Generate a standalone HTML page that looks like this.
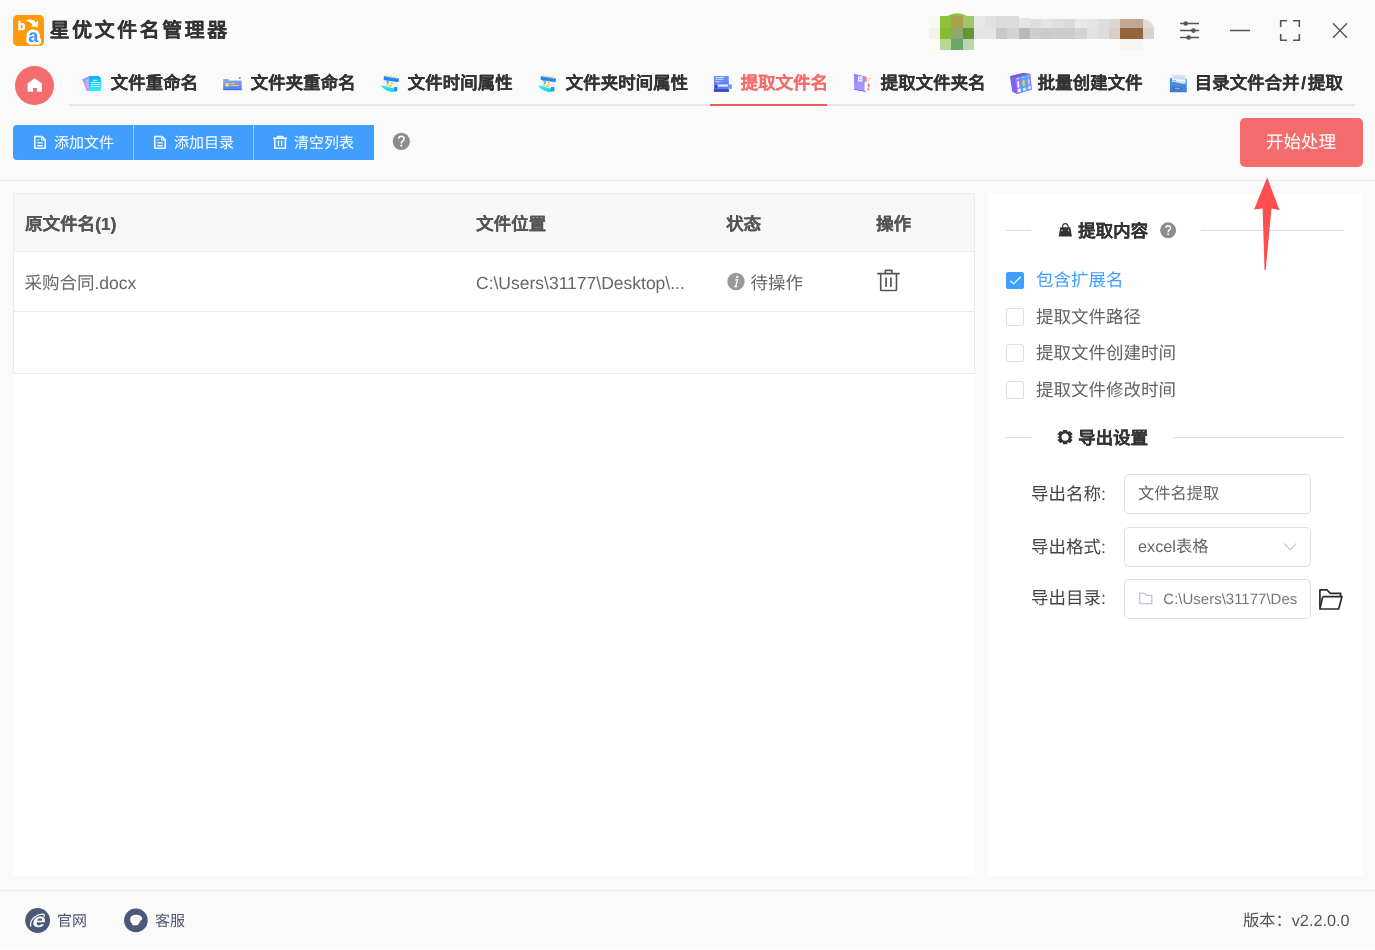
<!DOCTYPE html>
<html lang="zh-CN">
<head>
<meta charset="utf-8">
<title>星优文件名管理器</title>
<style>
html,body{margin:0;padding:0}
body{width:1375px;height:950px;overflow:hidden;background:#fafafa;font-family:"Liberation Sans",sans-serif;position:relative;color:#333;text-rendering:geometricPrecision}
#w{position:absolute;left:0;top:0;width:1375px;height:950px;will-change:transform}
.a{position:absolute}
.t{position:absolute;white-space:nowrap;line-height:1}
svg{position:absolute;overflow:visible}
/* title */
#title{left:49.5px;top:20.3px;font-size:20px;font-weight:bold;letter-spacing:2.5px;color:#333;line-height:22px;text-shadow:.25px 0 0 currentColor}
/* nav */
#navline{left:69px;top:104px;width:1286px;height:2px;background:#e4e7ed}
#navact{left:710px;top:104px;width:117px;height:2px;background:#f45b57}
.nv{font-size:17.5px;font-weight:bold;color:#333;top:72.6px;line-height:20px;margin-left:.4px;text-shadow:.28px 0 0 currentColor}
/* toolbar */
.btn{position:absolute;top:125px;height:35px;width:120px;background:#409eff}
.btn span{position:absolute;top:10.2px;font-size:15px;color:#fff;white-space:nowrap;line-height:17px}
#start{left:1240px;top:118px;width:123px;height:49px;border-radius:5px;background:#f56c6c}
#start span{position:absolute;left:26px;top:14px;font-size:17.5px;color:#fff;line-height:20px;white-space:nowrap}
#tbline{left:0;top:180px;width:1375px;height:1px;background:#ebebeb}
/* panels */
#lp{left:13px;top:193px;width:962px;height:683px;background:#fff}
#rp{left:988px;top:193px;width:375px;height:683px;background:#fff}
#tbl{left:13px;top:193px;width:962px;height:181px;border:1px solid #ebebeb;box-sizing:border-box}
#th{left:14px;top:194px;width:960px;height:57px;background:#f7f7f7}
.hl{position:absolute;left:14px;width:960px;height:1px;background:#ebebeb}
.th{font-size:17.5px;font-weight:bold;color:#555;top:214px;line-height:20px;text-shadow:.25px 0 0 currentColor}
.td{font-size:17.5px;color:#666;top:273px;line-height:20px}
/* right panel */
.dv{position:absolute;height:1px;background:#dcdfe6}
.dt{font-size:17.5px;font-weight:bold;color:#333;line-height:20px;margin-top:.4px;text-shadow:.25px 0 0 currentColor}
.cb{position:absolute;left:1006px;width:17.6px;height:17.5px;box-sizing:border-box;border:1px solid #dcdfe6;border-radius:2px;background:#fff}
.cl{font-size:17.5px;color:#606266;left:1036px;line-height:20px}
.lb{font-size:17.5px;color:#444;left:1031px;line-height:20px}
.in{position:absolute;left:1124px;width:187px;height:40px;box-sizing:border-box;border:1px solid #dcdfe6;border-radius:5px;background:#fff}
.iv{font-size:16.25px;color:#666;left:1138px;line-height:20px}
/* footer */
#ftline{left:0;top:890px;width:1375px;height:1px;background:#ebebeb}
.ft{font-size:15px;color:#555;top:911px;line-height:18px}
</style>
</head>
<body>
<div id="w">
<!-- TITLEBAR -->
<div class="t" id="title">星优文件名管理器</div>
<!-- NAV -->
<div class="a" id="navline"></div>
<div class="a" id="navact"></div>
<div class="t nv" style="left:110px">文件重命名</div>
<div class="t nv" style="left:250px">文件夹重命名</div>
<div class="t nv" style="left:407px">文件时间属性</div>
<div class="t nv" style="left:565px">文件夹时间属性</div>
<div class="t nv" style="left:740px;color:#f56c6c">提取文件名</div>
<div class="t nv" style="left:880px">提取文件夹名</div>
<div class="t nv" style="left:1037px">批量创建文件</div>
<div class="t nv" style="left:1194px">目录文件合并<span style="margin:0 1.7px">/</span>提取</div>
<!-- TOOLBAR -->
<div class="a" style="left:20px;top:125px;width:354px;height:35px;background:#9ccdff"></div>
<div class="btn" style="left:13px;border-radius:4px 0 0 4px"><span style="left:41px">添加文件</span></div>
<div class="btn" style="left:134px;width:119px"><span style="left:40px">添加目录</span></div>
<div class="btn" style="left:254px"><span style="left:40px">清空列表</span></div>
<div class="a" id="start"><span>开始处理</span></div>
<div class="a" id="tbline"></div>
<!-- PANELS -->
<div class="a" id="lp"></div>
<div class="a" id="rp"></div>
<div class="a" id="tbl"></div>
<div class="a" id="th"></div>
<div class="hl" style="top:251px"></div>
<div class="hl" style="top:311px"></div>
<div class="t th" style="left:25px">原文件名(1)</div>
<div class="t th" style="left:476px">文件位置</div>
<div class="t th" style="left:726px">状态</div>
<div class="t th" style="left:876px">操作</div>
<div class="t td" style="left:24.5px">采购合同.docx</div>
<div class="t td" style="left:476px">C:\Users\31177\Desktop\...</div>
<div class="t td" style="left:750.5px">待操作</div>
<!-- RIGHT PANEL -->
<div class="dv" style="left:1006px;top:230px;width:25px"></div>
<div class="dv" style="left:1201px;top:230px;width:143px"></div>
<div class="t dt" style="left:1078px;top:221px">提取内容</div>
<div class="cb" style="top:271.7px;height:17.2px;background:#409eff;border-color:#409eff"></div>
<div class="cb" style="top:308.1px"></div>
<div class="cb" style="top:344.4px"></div>
<div class="cb" style="top:381px"></div>
<div class="t cl" style="top:270px;color:#409eff">包含扩展名</div>
<div class="t cl" style="top:307px">提取文件路径</div>
<div class="t cl" style="top:343px">提取文件创建时间</div>
<div class="t cl" style="top:380px">提取文件修改时间</div>
<div class="dv" style="left:1006px;top:437px;width:25px"></div>
<div class="dv" style="left:1173px;top:437px;width:171px"></div>
<div class="t dt" style="left:1078px;top:428px">导出设置</div>
<div class="t lb" style="top:484px">导出名称:</div>
<div class="t lb" style="top:537px">导出格式:</div>
<div class="t lb" style="top:588px">导出目录:</div>
<div class="in" style="top:474px"></div>
<div class="in" style="top:527px"></div>
<div class="in" style="top:579px"></div>
<div class="t iv" style="top:484px">文件名提取</div>
<div class="t iv" style="top:537px">excel表格</div>
<div class="t iv" style="top:589.5px;left:1163.3px;width:134.9px;overflow:hidden;color:#777;font-size:15px">C:\Users\31177\Desktop</div>
<!-- FOOTER -->
<div class="a" style="left:0;top:947px;width:1375px;height:3px;background:linear-gradient(#fafafa,#fefefe)"></div>
<div class="a" id="ftline"></div>
<div class="t ft" style="left:57px;top:912.7px;color:#4f576f">官网</div>
<div class="t ft" style="left:155px;top:912.7px;color:#4f576f">客服</div>
<div class="t ft" style="left:1243px;top:911.8px;font-size:16.25px">版本：v2.2.0.0</div>
<!-- ICONS -->
<svg id="ic" width="1375" height="950" viewBox="0 0 1375 950" style="left:0;top:0">
<defs>
<linearGradient id="g1" x1="0" y1="0" x2="0" y2="1"><stop offset="0" stop-color="#0fb0f8"/><stop offset="1" stop-color="#20f8f4"/></linearGradient>
<linearGradient id="g1b" x1="0" y1="0" x2="0.3" y2="1"><stop offset="0" stop-color="#6aa8ff"/><stop offset="1" stop-color="#e08cf8"/></linearGradient>
<linearGradient id="g2" x1="0" y1="0" x2="0" y2="1"><stop offset="0" stop-color="#93a8ff"/><stop offset="1" stop-color="#4f7dff"/></linearGradient>
<linearGradient id="g5" x1="0" y1="0" x2="0" y2="1"><stop offset="0" stop-color="#6f90ff"/><stop offset="0.8" stop-color="#587af5"/><stop offset="1" stop-color="#4a63d8"/></linearGradient>
<linearGradient id="g6" x1="0" y1="0" x2="0" y2="1"><stop offset="0" stop-color="#8c84ff"/><stop offset="1" stop-color="#a89fff"/></linearGradient>
<linearGradient id="g7" x1="0" y1="0" x2="1" y2="0"><stop offset="0" stop-color="#7a5cf2"/><stop offset="1" stop-color="#9a7cf8"/></linearGradient>
<linearGradient id="g8" x1="0" y1="0" x2="0" y2="1"><stop offset="0" stop-color="#4a94e8"/><stop offset="1" stop-color="#3a7ccf"/></linearGradient>
<linearGradient id="gc" x1="0" y1="0" x2="1" y2="0.4"><stop offset="0" stop-color="#2aeaf5"/><stop offset="1" stop-color="#1fd0f5"/></linearGradient>
<g id="cal">
<path d="M1.5 4.5 L16 7 L15.5 15.5 L1 12.5 Z" fill="#eef0fb"/>
<path d="M1.9 1 L17 3.4 L16.5 7.2 L1.7 4.9 Z" fill="#1f8af5"/>
<path d="M4.3 0.2v1.6M7 0.6v1.6M9.4 1v1.6M11.8 1.4v1.6M14.2 1.8v1.6" stroke="#f7c98a" stroke-width="1" stroke-linecap="round"/>
<path d="M-1 10.5 C3 11 8 12.5 11.5 13.5 L15.2 13 L15.2 16.6 L10 17 C6 16.5 1 14 -1 10.5 Z" fill="url(#gc)"/>
<rect x="11.9" y="12" width="3.3" height="3.9" fill="#1d98f5"/>
<path d="M4.2 6.3 q1.5-.8 2.2.3 q.4 1-1.6 2.6" stroke="#2f9af5" stroke-width="1.1" fill="none"/>
<path d="M8.6 7.2 l1.6 .3 -.4 2.2" stroke="#f2c832" stroke-width="1.1" fill="none"/>
<circle cx="8.3" cy="11" r="1.5" fill="#f5dc1e"/>
<ellipse cx="4.4" cy="10.8" rx="1.4" ry=".8" fill="#f5dc1e"/>
</g>
</defs>
<!-- logo -->
<rect x="13" y="15" width="31" height="31" rx="4.5" fill="#ff990d"/>
<text x="17.8" y="29.5" font-family="Liberation Sans" font-weight="bold" font-size="12.5" fill="#fff" stroke="#fff" stroke-width=".45" stroke-linejoin="round">b</text>
<path d="M25.4 20.4 C29.5 18.4 34.2 19.6 35.9 22.6 L38.2 20.5 L37.6 27.2 L30.7 26.3 L32.8 24.9 C31.2 22.6 28.6 21.4 25.4 20.4 Z" fill="#fff"/>
<text x="28.2" y="42" font-family="Liberation Sans" font-weight="bold" font-size="18" fill="#3c96f8" stroke="#fff" stroke-width="5.4" stroke-linejoin="round" paint-order="stroke">a</text>
<!-- mosaic -->
<g shape-rendering="crispEdges">
<path d="M947 16 Q957 10.5 967 16 Z" fill="#8fc33a" shape-rendering="auto"/>
<rect x="929" y="16" width="11" height="12" fill="#f8f8f6"/><rect x="929" y="28" width="11" height="11" fill="#f1f4e8"/>
<rect x="940" y="16" width="11" height="12" fill="#8fc03c"/><rect x="951" y="16" width="12" height="12" fill="#a9a04b"/><rect x="963" y="16" width="11" height="12" fill="#a3c56a"/>
<rect x="940" y="28" width="11" height="11" fill="#86bd2e"/><rect x="951" y="28" width="12" height="11" fill="#90a774"/><rect x="963" y="28" width="11" height="11" fill="#5f9733"/>
<rect x="940" y="39" width="11" height="11" fill="#b6d794"/><rect x="951" y="39" width="12" height="11" fill="#69a86c"/><rect x="963" y="39" width="11" height="11" fill="#c2d3b2"/>
<rect x="974" y="16" width="11" height="12" fill="#e7e7e7"/><rect x="985" y="16" width="11" height="12" fill="#e1e1e1"/><rect x="996" y="16" width="23" height="12" fill="#dbdbdb"/>
<rect x="1019" y="18" width="11" height="10" fill="#e5e5e5"/><rect x="1030" y="19" width="11" height="9" fill="#dedede"/><rect x="1041" y="19" width="12" height="9" fill="#e4e4e4"/><rect x="1053" y="19" width="11" height="9" fill="#dfdfdf"/><rect x="1064" y="19" width="11" height="9" fill="#dadada"/><rect x="1075" y="19" width="12" height="9" fill="#e8e8e8"/><rect x="1087" y="19" width="11" height="9" fill="#e4e4e4"/><rect x="1098" y="19" width="11" height="9" fill="#dddddd"/><rect x="1109" y="19" width="11" height="9" fill="#dcd6d2"/>
<rect x="974" y="28" width="22" height="11" fill="#e5e5e5"/><rect x="996" y="28" width="11" height="11" fill="#c9c9c9"/><rect x="1007" y="28" width="12" height="11" fill="#d3d3d3"/><rect x="1019" y="28" width="11" height="11" fill="#b9b9b9"/><rect x="1030" y="28" width="11" height="11" fill="#cecece"/><rect x="1041" y="28" width="12" height="11" fill="#cbcbcb"/><rect x="1053" y="28" width="22" height="11" fill="#cdcdcd"/><rect x="1075" y="28" width="12" height="11" fill="#d4d4d4"/><rect x="1087" y="28" width="11" height="11" fill="#e2e2e2"/><rect x="1098" y="28" width="11" height="11" fill="#dcdcdc"/><rect x="1109" y="28" width="11" height="11" fill="#d9cdc5"/>
<rect x="1120" y="19" width="23" height="9" fill="#c3a795"/><rect x="1120" y="28" width="23" height="11" fill="#95643a"/>
<path d="M1143 19 Q1153 21 1154 28 L1143 28 Z" fill="#e6dbd3" shape-rendering="auto"/><rect x="1143" y="28" width="11" height="11" fill="#ddd0c6"/>
<rect x="1120" y="39" width="23" height="11" fill="#f7f5f3"/>
</g>
<!-- window controls -->
<g stroke="#555" stroke-width="1.5" fill="none">
<path d="M1180 23.5H1199M1180 30.6H1199M1180 37.5H1199"/>
<path d="M1230 30.5H1250"/>
<path d="M1280.7 27V20.8H1287M1293 20.8H1299.3V27M1299.3 34V40.2H1293M1287 40.2H1280.7V34" stroke-width="1.6"/>
<path d="M1333 23.3L1347 37.7M1347 23.3L1333 37.7" stroke-width="1.4"/>
</g>
<circle cx="1185.7" cy="23.5" r="2.3" fill="#555"/><circle cx="1193.4" cy="30.6" r="2.3" fill="#555"/><circle cx="1188.7" cy="37.5" r="2.3" fill="#555"/>
<!-- home -->
<circle cx="34.5" cy="85.5" r="19.5" fill="#f56c6e"/>
<path d="M34.7 78.2L41.9 83.6V91.8H36.9V87.9H33V91.8H27.6V83.6Z" fill="#fff"/>
<!-- toolbar icons -->
<g fill="none" stroke="#fff" stroke-width="1.5" stroke-linejoin="round">
<path d="M34.8 136.5H41.8L45.2 139.8V148.2H34.8Z"/><path d="M41.6 136.5V140H45.2M37.3 142.8H42.8M37.3 145.6H42.8M37.3 140H39.2" stroke-width="1.2"/>
<path d="M154.8 136.5H161.8L165.2 139.8V148.2H154.8Z"/><path d="M161.6 136.5V140H165.2M157.3 142.8H162.8M157.3 145.6H162.8M157.3 140H159.2" stroke-width="1.2"/>
<path d="M273.2 138.2H286.8M277.6 138V136.4H282.6V138M274.8 138.4V148.3H285.4V138.4" stroke-width="1.5"/><path d="M278.5 140.6V146M281.6 140.6V146" stroke-width="1.3"/>
</g>
<circle cx="401.3" cy="141.3" r="8.6" fill="#8c8c8c"/>
<path d="M398.6 138.6Q398.8 136.3 401.4 136.3Q404.2 136.4 404.1 138.8Q404 140.3 402.5 141.2Q401.3 142 401.3 143.4" fill="none" stroke="#fff" stroke-width="1.6"/><circle cx="401.3" cy="145.6" r="1.05" fill="#fff"/>
<!-- arrow -->
<path d="M1267.2 177.5L1279.6 210.2L1271.5 208.6L1265.7 270H1264.5L1262.6 208.4L1254 209.4Z" fill="#fd4f4f"/>
<!-- nav icon 1: docs -->
<path d="M82.3 79.2L88.9 76.4V90.7L86.8 91.2Z" fill="url(#g1b)"/>
<path d="M85 77.8L89.5 76.2V90.8L88 91Z" fill="#a99cfa" opacity=".7"/>
<path d="M85.9 81L88.6 80.2M86.3 83.2L88.6 82.7M86.7 85.3L88.6 85M87.1 87.3L88.6 87.1" stroke="#fff" stroke-width=".8" opacity=".75"/>
<path d="M88.9 75.9H98.6L100.9 78.2V90.9H88.9Z" fill="url(#g1)"/>
<path d="M98.2 75.9L100.9 78.6H98.2Z" fill="#0a9af5"/>
<path d="M93 80.3H97M91.1 82.5H99.8M91.1 84.5H99.8M91.1 86.5H99.8" stroke="#fff" stroke-width=".9" opacity=".95"/>
<!-- nav icon 2: folder card -->
<path d="M223.2 79.4Q223.2 78.9 223.7 78.9H228.6L229.2 80.5H241.2Q241.7 80.5 241.7 81V90.1H223.2Z" fill="url(#g2)"/>
<rect x="223.2" y="88.8" width="18.5" height="1.4" fill="#3d6cf6"/>
<rect x="225.3" y="83.2" width="3.6" height="3.2" rx=".4" fill="#ffe93a"/>
<path d="M230.3 83.6H234.7M230.3 85.5H238.8" stroke="#f7e23c" stroke-width=".9"/>
<circle cx="239.8" cy="77.9" r="1" fill="#f4606c"/>
<!-- nav icon 3,4: calendar -->
<use href="#cal" x="382" y="75"/>
<use href="#cal" x="539" y="75"/>
<!-- nav icon 5 -->
<rect x="713.9" y="76.1" width="14.9" height="15.7" rx=".6" fill="url(#g5)"/>
<rect x="713.9" y="89.3" width="14.9" height="2.5" fill="#3a49b4"/>
<rect x="728" y="84.4" width="3.8" height="4.4" fill="#7196ff"/>
<path d="M715.6 77.6H724M715.6 79.3H723.4M715.6 81.6H718.8" stroke="#dfe6ff" stroke-width=".9"/>
<path d="M719 81.6H722.5" stroke="#8fa8ff" stroke-width=".9"/>
<rect x="717.7" y="84.5" width="10.2" height="2.1" fill="#eef2ff"/>
<rect x="715.4" y="85" width="1.7" height="3.6" fill="#2c3896"/>
<!-- nav icon 6: book -->
<path d="M853.9 73.8L865.6 76.4V91.8L854.1 89.8Z" fill="url(#g6)"/>
<path d="M854.1 88.9L865.6 90.9V91.8L854.1 89.8Z" fill="#6b5fe0"/>
<rect x="857.9" y="76.3" width="4.7" height="5.3" fill="#f2f0ff"/>
<path d="M859 78h1.2M859 79.6h2.6" stroke="#8f88ff" stroke-width=".7"/>
<path d="M865.6 77L867.2 77.2V81.3L865.6 81.2Z" fill="#ff8a6e"/>
<path d="M867.8 78.1H871L870.6 79.2H867.8Z" fill="#ffd348"/>
<path d="M868 80L870 80.2V81L868 80.8Z" fill="#ffe9a8"/>
<path d="M864.6 82.2L867.6 82.6V90.9L864.6 90.6Z" fill="#fff"/>
<ellipse cx="868.7" cy="85.6" rx="1.1" ry="2" fill="#ff6b7c"/>
<circle cx="868" cy="89.3" r="1.15" fill="#ff6b7c"/>
<!-- nav icon 7: binders -->
<path d="M1009.9 76.2L1023.3 72.9L1030.3 74L1031.8 89.5L1017.3 93.9L1012.3 91.7Z" fill="url(#g7)"/>
<path d="M1009.9 76.2L1023.3 72.9L1030.3 74L1016 77.5Z" fill="#6d58d6"/>
<path d="M1015.6 77.6L1020.6 76.3L1021.7 92.6L1017.3 93.9Z" fill="#9a7af9"/>
<path d="M1020.6 76.3L1025.9 75L1027 91L1021.7 92.6Z" fill="#36b6f6"/>
<path d="M1025.9 75L1030.3 74L1031.8 89.5L1027 91Z" fill="#8a8cff"/>
<path d="M1016.5 78.6L1019 78V79L1016.5 79.6Z" fill="#e9e2ff"/>
<path d="M1021.8 77.3L1024.6 76.6V77.6L1021.8 78.3Z" fill="#7fdcff"/>
<path d="M1026.7 76L1029.4 75.4V76.4L1026.7 77Z" fill="#6fd0ff"/>
<path d="M1017.3 81.6L1019 81.2L1019.4 87.3L1017.7 87.7Z" fill="#fff"/>
<path d="M1022.2 80.6L1024.4 80.1L1024.9 85.6L1022.7 86.1Z" fill="#ffca4c"/>
<path d="M1027.6 78.9L1029.3 78.5L1029.7 84.1L1028 84.5Z" fill="#a8dcff"/>
<path d="M1017.6 89.2L1020.6 88.4L1020.9 91.8L1017.9 92.6Z" fill="#e9fbff"/>
<path d="M1023 88.2L1025.6 87.5L1025.9 90.2L1023.3 90.9Z" fill="#e9f6ff"/>
<path d="M1028 86.4L1030.7 85.7L1031 88.6L1028.3 89.3Z" fill="#d6ecff"/>
<!-- nav icon 8: drawer -->
<path d="M1169.9 78.3L1172.2 78.1V84H1169.9Z" fill="#3f8cf0"/>
<path d="M1172.2 74.4L1185.7 75.4V84H1172.2Z" fill="#d9e3f3"/>
<path d="M1172.4 77.4L1185.6 78.6" stroke="#b9cdf0" stroke-width=".7"/>
<path d="M1172.6 79.8L1185.4 80.8" stroke="#fff" stroke-width=".9"/>
<path d="M1172.8 80.5H1176" stroke="#5f9cf0" stroke-width=".7"/>
<path d="M1185.7 78.6L1186.8 79.4V84H1185.7Z" fill="#3f8cf0"/>
<path d="M1169.9 81.6Q1176 82 1179 83Q1183 84.4 1186.8 83.2V92.3H1169.9Z" fill="url(#g8)"/>
<rect x="1173" y="87.6" width="9.1" height="1.7" rx=".8" fill="#2d62c2"/>
<rect x="1174.6" y="87.9" width="5.6" height="1" fill="#c9b272"/>
<!-- table icons -->
<circle cx="736" cy="281.5" r="8.7" fill="#999"/>
<circle cx="737.2" cy="277" r="1.15" fill="#fff"/>
<path d="M735.2 279.8H737.6L735.7 286.6H737M734 286.6H737.2" fill="none" stroke="#fff" stroke-width="1.3"/>
<g fill="none" stroke="#555" stroke-width="1.6" stroke-linecap="round" stroke-linejoin="round">
<path d="M877.8 273.6H899.2M885.3 273.4V270.4H891.9V273.4M880.7 274V289.4Q880.7 290.5 881.8 290.5H895.4Q896.5 290.5 896.5 289.4V274"/>
<path d="M886.1 278.2V286.2M890.9 278.2V286.2" stroke-width="1.7"/>
</g>
<!-- right panel icons -->
<path d="M1060.3 227.3H1070.3L1071.9 236.6H1058.7Z" fill="#333"/>
<path d="M1062.5 227.6Q1062.5 223.6 1065.3 223.6Q1068.1 223.6 1068.1 227.6" fill="none" stroke="#333" stroke-width="1.2"/>
<path d="M1062 229.6V231.2M1068.4 229.6V231.2" stroke="#fff" stroke-width=".9"/>
<circle cx="1168.1" cy="230.3" r="8" fill="#8c8c8c"/>
<path d="M1165.7 227.9Q1165.9 225.8 1168.2 225.8Q1170.7 225.9 1170.6 228Q1170.5 229.4 1169.2 230.2Q1168.1 230.9 1168.1 232.2" fill="none" stroke="#fff" stroke-width="1.4"/><circle cx="1168.1" cy="234.3" r=".95" fill="#fff"/>
<path d="M1010.3 280.8L1013.6 283.9L1020.8 276.7" fill="none" stroke="#fff" stroke-width="1.3" opacity=".9"/>
<path fill="#333" fill-rule="evenodd" d="M1063.2 430H1067L1067.8 432.1L1069.9 430.9L1072.7 434.2L1070.8 435.8L1072.7 437.1L1070.8 438.4L1072.7 440L1069.9 443.3L1067.8 442.1L1067 444.2H1063.2L1062.4 442.1L1060.3 443.3L1057.5 440L1059.4 438.4L1057.5 437.1L1059.4 435.8L1057.5 434.2L1060.3 430.9L1062.4 432.1ZM1065.1 433.5A3.6 3.6 0 1 0 1065.1 440.7A3.6 3.6 0 1 0 1065.1 433.5Z"/>
<path d="M1284.3 543.6L1290.2 549.6L1296.1 543.6" fill="none" stroke="#c0c4cc" stroke-width="1.3"/>
<path d="M1139.7 603.6V593.2H1144L1146.2 595.3H1151.8V603.6Z" fill="none" stroke="#c3c6d2" stroke-width="1.3"/>
<g fill="none" stroke="#2b2b2b" stroke-width="1.7" stroke-linejoin="round">
<path d="M1319.9 607.5V589.9H1326.9L1330.4 593.3H1340.6V596.5"/>
<path d="M1322.7 596.7H1342L1338.6 609H1319.9L1322.7 596.7"/>
</g>
<!-- footer icons -->
<circle cx="37.6" cy="920.5" r="12.4" fill="#4d5878"/>
<text transform="translate(31.6 927.2) scale(1.2 1) skewX(-10)" font-family="Liberation Sans" font-weight="bold" font-size="19.5" fill="#fff">e</text>
<path d="M30.7 926.6Q29.6 921.4 34.4 917.3Q39.6 913.3 43.9 914.4Q44.8 915.4 43.9 916.9" fill="none" stroke="#fff" stroke-width="1.2"/>
<circle cx="135.9" cy="920.4" r="11.8" fill="#4d5878"/>
<path d="M130.1 919.8Q130.1 914.7 136.2 914.7Q142.3 914.7 142.3 919.6Q140.6 920 140 921.6Q139.2 923.6 137.6 925.2H132.4L132 923.6Q130.1 922.4 130.1 919.8Z" fill="#fff"/>
</svg>
</div>
</body>
</html>
